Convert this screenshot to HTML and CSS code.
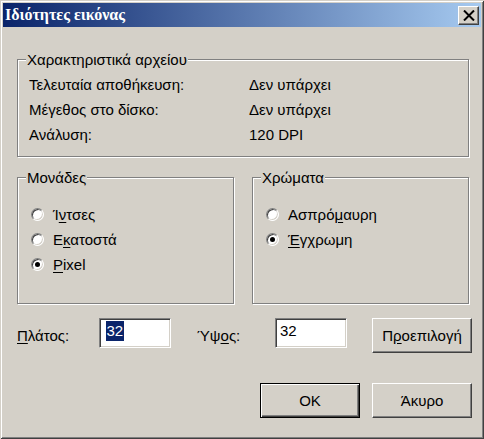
FILE: index.html
```html
<!DOCTYPE html>
<html lang="el">
<head>
<meta charset="utf-8">
<title>Ιδιότητες εικόνας</title>
<link rel="stylesheet" href="styles.css">
</head>
<body>
<div class="window">
  <div class="titlebar">
    <span class="title">Ιδιότητες εικόνας</span>
    <button class="close" aria-label="Κλείσιμο">
      <svg width="12" height="11" viewBox="0 0 12 11"><path d="M1 0.5 L11 10.5 M11 0.5 L1 10.5" stroke="#000" stroke-width="2" fill="none"/></svg>
    </button>
  </div>
  <div class="content">
    <div class="group group-file">
      <span class="legend">Χαρακτηριστικά αρχείου</span>
      <div class="info">
        <div class="info-row"><span class="info-label">Τελευταία αποθήκευση:</span><span>Δεν υπάρχει</span></div>
        <div class="info-row"><span class="info-label">Μέγεθος στο δίσκο:</span><span>Δεν υπάρχει</span></div>
        <div class="info-row"><span class="info-label">Ανάλυση:</span><span>120 DPI</span></div>
      </div>
    </div>
    <div class="groups">
      <div class="group group-half">
        <span class="legend">Μονάδες</span>
        <div class="options">
          <div class="option"><span class="radio"></span><span>Ί<u>ν</u>τσες</span></div>
          <div class="option"><span class="radio"></span><span>Ε<u>κ</u>ατοστά</span></div>
          <div class="option"><span class="radio checked"></span><span><u>P</u>ixel</span></div>
        </div>
      </div>
      <div class="group group-half">
        <span class="legend">Χρώματα</span>
        <div class="options">
          <div class="option"><span class="radio"></span><span>Ασπρό<u>μ</u>αυρη</span></div>
          <div class="option"><span class="radio checked"></span><span><u>Έ</u>γχρωμη</span></div>
        </div>
      </div>
    </div>
    <div class="size-row">
      <span class="size-label"><u>Π</u>λάτος:</span>
      <div class="field"><span class="selected">32</span></div>
      <span class="size-label size-label-2">Ύψ<u>ο</u>ς:</span>
      <div class="field field-2"><span>32</span></div>
      <button class="btn btn-default-size">Π<u>ρ</u>οεπιλογή</button>
    </div>
    <div class="actions">
      <button class="btn btn-primary">OK</button>
      <button class="btn">Άκυρο</button>
    </div>
  </div>
</div>
</body>
</html>
```
FILE: styles.css
```css
* { box-sizing: border-box; }
html, body { margin: 0; padding: 0; }
body {
  background: #d4d0c8;
  font-family: "Liberation Sans", Arial, sans-serif;
  font-size: 15px;
  color: #000;
}
u { text-decoration: underline; text-underline-offset: 2px; }

.window {
  width: 484px;
  height: 439px;
  padding: 3px;
  background: #d4d0c8;
  box-shadow: inset 1px 1px #d4d0c8, inset -1px -1px #404040, inset 2px 2px #fff, inset -2px -2px #808080;
}

.titlebar {
  height: 24px;
  display: flex;
  align-items: center;
  justify-content: space-between;
  padding: 0 2px 0 2px;
  background: linear-gradient(to right, #0a246a, #a6caf0);
}
.title {
  font-family: "Liberation Serif", "Times New Roman", serif;
  font-weight: bold;
  font-size: 16px;
  color: #fff;
  white-space: nowrap;
}
.close {
  width: 21px;
  height: 19px;
  padding: 0;
  margin: 0;
  display: flex;
  align-items: center;
  justify-content: center;
  background: #d4d0c8;
  border: 1px solid;
  border-color: #fff #404040 #404040 #fff;
  box-shadow: inset -1px -1px #808080;
}

.content {
  padding: 32px 9px 0 14px;
}

.group {
  position: relative;
  border: 1px solid #808080;
  box-shadow: inset 1px 1px #fff, 1px 1px #fff;
}
.legend {
  display: table;
  margin: -9px 0 0 8px;
  padding: 0 1px;
  line-height: 17px;
  background: #d4d0c8;
  white-space: nowrap;
}
.group-file {
  width: 452px;
  height: 98px;
}
.info {
  padding: 4px 0 0 11px;
}
.info-row {
  display: flex;
  height: 25px;
  align-items: center;
}
.info-label { width: 220px; }

.groups {
  display: flex;
  gap: 18px;
  margin-top: 20px;
}
.group-half {
  width: 217px;
  height: 127px;
}
.options {
  padding: 16px 0 0 13px;
}
.option {
  display: flex;
  align-items: center;
  height: 25px;
}
.radio {
  position: relative;
  width: 13px;
  height: 13px;
  margin-right: 9px;
  border-radius: 50%;
  background: #fff;
  border: 1px solid;
  border-color: #808080 #fff #fff #808080;
  box-shadow: inset 1px 1px #404040, inset -1px -1px #d4d0c8;
  flex: none;
}
.radio.checked::after {
  content: "";
  position: absolute;
  left: 3px;
  top: 3px;
  width: 5px;
  height: 5px;
  border-radius: 50%;
  background: #000;
}

.size-row {
  display: flex;
  align-items: center;
  height: 35px;
  margin-top: 14px;
}
.size-label { width: 82px; }
.size-label-2 { width: 78px; margin-left: 26px; }
.field {
  align-self: flex-start;
  width: 72px;
  height: 30px;
  background: #fff;
  border: 1px solid;
  border-color: #808080 #fff #fff #808080;
  box-shadow: inset 1px 1px #404040, inset -1px -1px #d4d0c8;
  padding: 2px 0 0 6px;
  display: flex;
  align-items: flex-start;
}
.field span { line-height: 20px; }
.field-2 { padding-left: 4px; }
.selected {
  background: #0a246a;
  color: #fff;
  padding: 0 0.5px;
}

.btn {
  width: 100px;
  height: 35px;
  padding: 0;
  font: inherit;
  color: #000;
  background: #d4d0c8;
  border: 1px solid;
  border-color: #fff #404040 #404040 #fff;
  box-shadow: inset -1px -1px #808080;
}
.btn-default-size { margin-left: auto; }
.btn-primary {
  border: 1px solid #000;
  box-shadow: inset 1px 1px #fff, inset -1px -1px #404040, inset -2px -2px #808080;
}

.actions {
  display: flex;
  justify-content: flex-end;
  gap: 12px;
  margin-top: 30px;
}
```
